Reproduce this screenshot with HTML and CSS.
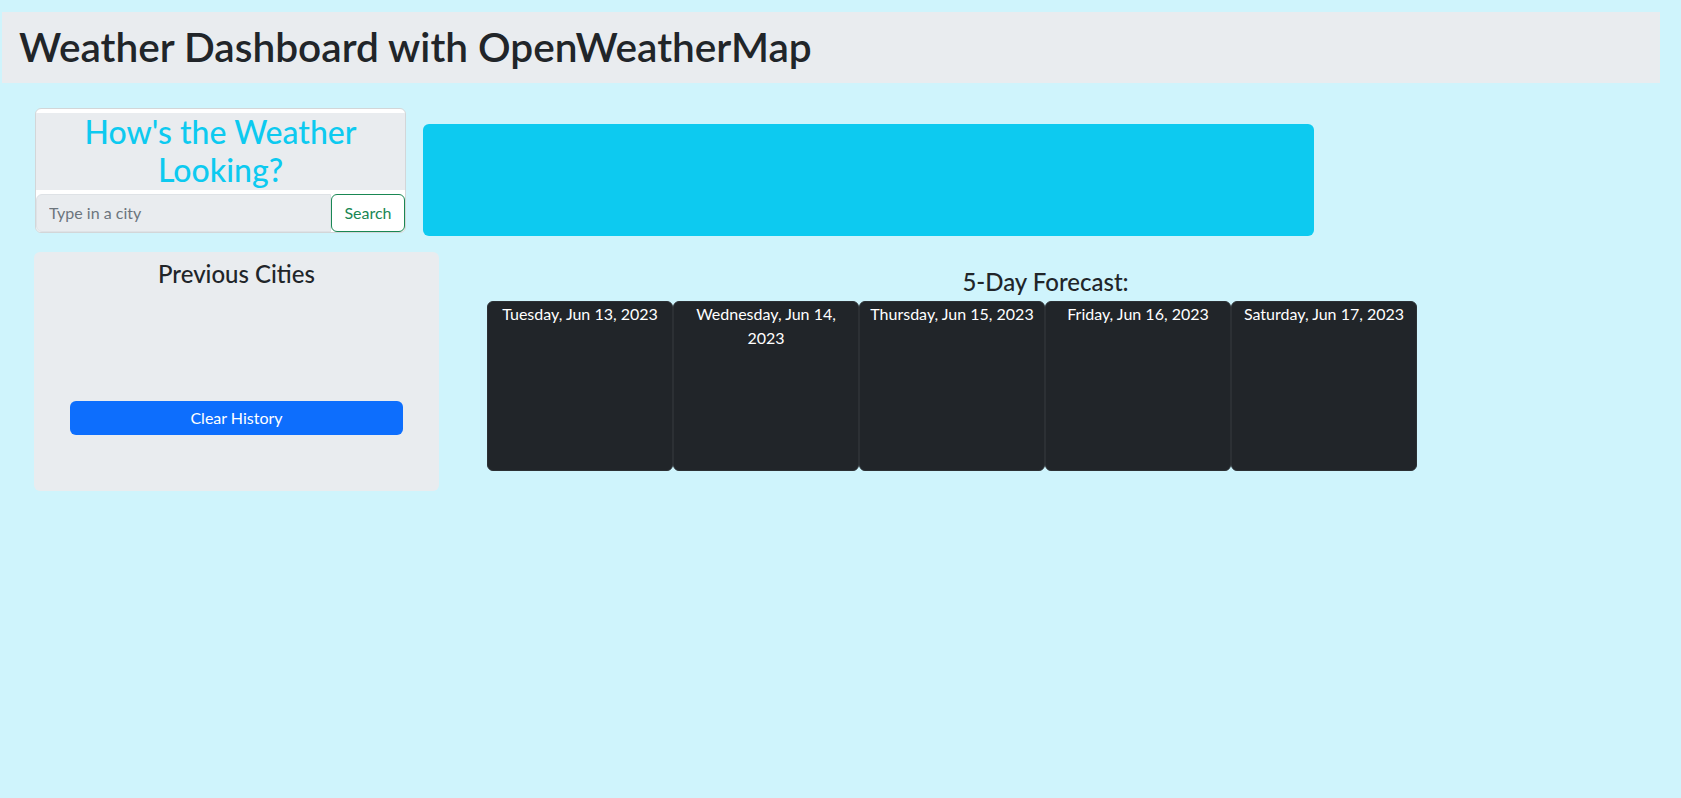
FILE: index.html
```html
<!DOCTYPE html>
<html lang="en">
<head>
<meta charset="utf-8">
<title>Weather Dashboard</title>
<link rel="stylesheet" href="styles.css">
</head>
<body>
<header class="topbar">
  <h1 class="title">Weather Dashboard with OpenWeatherMap</h1>
</header>
<main class="layout">
  <section class="row-top">
    <div class="search-card">
      <h2 class="ask">How's the Weather Looking?</h2>
      <form class="input-group">
        <input class="city-input" type="text" placeholder="Type in a city">
        <button class="btn-search" type="button">Search</button>
      </form>
    </div>
    <div class="current"></div>
  </section>
  <section class="row-bottom">
    <aside class="history-card">
      <h4 class="history-title">Previous Cities</h4>
      <ul class="history-list"></ul>
      <button class="btn-clear" type="button">Clear History</button>
    </aside>
    <div class="forecast">
      <h4 class="forecast-title">5-Day Forecast:</h4>
      <div class="forecast-cards">
        <div class="day-card">Tuesday, Jun 13, 2023</div>
        <div class="day-card">Wednesday, Jun 14, 2023</div>
        <div class="day-card">Thursday, Jun 15, 2023</div>
        <div class="day-card">Friday, Jun 16, 2023</div>
        <div class="day-card">Saturday, Jun 17, 2023</div>
      </div>
    </div>
  </section>
</main>
</body>
</html>
```
FILE: styles.css
```css
* { box-sizing: border-box; }
body {
  margin: 0;
  background: #cff4fc;
  font-family: "Lato", "Open Sans", sans-serif;
  color: #212529;
  font-size: 16px;
  line-height: 1.5;
}
.topbar {
  margin: 12px 21px 0 2px;
  height: 71px;
  background: #e9ecef;
  display: flex;
  align-items: center;
  padding-left: 17px;
}
.title {
  margin: 0;
  font-size: 40.6px;
  font-weight: 600;
  line-height: 1.2;
}
.row-top {
  display: flex;
  align-items: flex-start;
  margin-top: 25px;
  padding-left: 35px;
}
.search-card {
  width: 371px;
  background: #fff;
  border: 1px solid #d3d6d8;
  border-radius: 6px;
  padding-top: 4px;
}
.ask {
  margin: 0 0 4px;
  background: #e9ecef;
  color: #0dcaf0;
  font-size: 32px;
  font-weight: 500;
  line-height: 1.2;
  text-align: center;
}
.input-group {
  display: flex;
  height: 38px;
  margin: 0;
}
.city-input {
  flex: 1;
  min-width: 0;
  background: #e9ecef;
  border: 1px solid #dee2e6;
  border-radius: 6px 0 0 6px;
  padding: 0 12px;
  font: inherit;
  color: #212529;
}
.city-input::placeholder { color: #6c757d; }
.btn-search {
  width: 74px;
  background: #fff;
  border: 1px solid #198754;
  border-radius: 6px;
  color: #198754;
  font: inherit;
  padding: 0;
}
.current {
  width: 891px;
  height: 112px;
  margin: 16px 0 0 17px;
  background: #0dcaf0;
  border-radius: 6px;
}
.row-bottom {
  display: flex;
  align-items: flex-start;
  margin-top: 16px;
  padding-left: 34px;
}
.history-card {
  width: 405px;
  height: 239px;
  background: #e9ecef;
  border-radius: 6px;
  padding: 8px 36px 0;
  display: flex;
  flex-direction: column;
}
.history-title {
  margin: 0;
  font-size: 24px;
  font-weight: 500;
  line-height: 1.2;
  text-align: center;
}
.history-list {
  list-style: none;
  margin: 0;
  padding: 0;
  height: 112px;
}
.btn-clear {
  height: 34px;
  background: #0d6efd;
  color: #fff;
  border: none;
  border-radius: 6px;
  font: inherit;
}
.forecast {
  width: 1165px;
  margin-left: 24px;
  padding-top: 16px;
}
.forecast-title {
  margin: 0 0 4px;
  font-size: 24px;
  font-weight: 500;
  line-height: 1.2;
  text-align: center;
}
.forecast-cards {
  display: flex;
  padding-left: 24px;
}
.day-card {
  width: 186px;
  height: 170px;
  background: #212529;
  border: 1px solid #2c3034;
  border-radius: 6px;
  color: #fff;
  text-align: center;
  padding: 0 8px;
}
```
